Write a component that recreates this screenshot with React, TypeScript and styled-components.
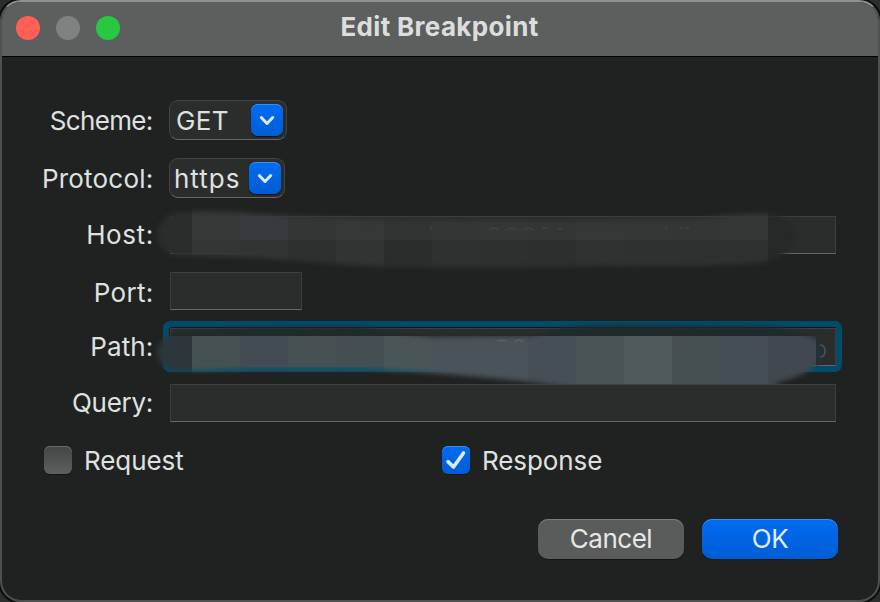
import React from 'react';
import styled, { createGlobalStyle } from 'styled-components';

const GlobalStyle = createGlobalStyle`
  * { box-sizing: border-box; }
  html, body { margin: 0; padding: 0; background: #2c2e2d; overflow: hidden; }
  body { font-family: Inter, "Liberation Sans", sans-serif; color: #dfe1e0; -webkit-font-smoothing: antialiased; }
  button, input { font: inherit; color: inherit; }
`;

const Window = styled.main`
  position: relative;
  width: 880px;
  height: 602px;
  display: flex;
  flex-direction: column;
  overflow: hidden;
  border: 2px solid #4f5150;
  border-top-color: #8f9190;
  border-radius: 21px;
  background: #202221;
  box-shadow: 0 0 0 2px #0b0c0c;
`;

const TitleBar = styled.header`
  flex: none;
  height: 55px;
  margin: 0 -2px;
  padding: 0 16px;
  display: flex;
  align-items: center;
  background: #5d5f5e;
  border-bottom: 1px solid #000;
  box-shadow: inset 2px 0 #7a7c7b, inset -2px 0 #7a7c7b;
`;

const Lights = styled.div`
  display: flex;
  gap: 16px;
  width: 104px;
  margin-top: -3px;
`;

const Light = styled.span<{ $color: string }>`
  width: 24px;
  height: 24px;
  border-radius: 50%;
  background: ${(p) => p.$color};
`;

const Title = styled.h1`
  flex: 1;
  margin: -5px 105px 0 0;
  text-align: center;
  font-size: 26px;
  line-height: 32px;
  font-weight: 700;
  letter-spacing: 0.33px;
  color: #dcdedd;
`;

const Form = styled.form`
  position: relative;
  flex: 1;
  padding: 43px 40px 0 40px;
  display: flex;
  flex-direction: column;
`;

const Fields = styled.div`
  display: grid;
  grid-template-columns: 112px 667px;
  grid-template-rows: 40px 40px repeat(4, 38px);
  gap: 18px 15px;
  align-items: center;
`;

const Label = styled.label<{ $spacing: number; $drop?: number }>`
  justify-self: end;
  white-space: nowrap;
  font-size: 26px;
  line-height: 32px;
  letter-spacing: ${(p) => p.$spacing}px;
  margin-right: ${(p) => 0.8 - p.$spacing}px;
  padding-top: ${(p) => (p.$drop ?? 0) * 2}px;
`;

const Popup = styled.button.attrs({ type: 'button' })<{ $width: number; $inset: number }>`
  width: ${(p) => p.$width}px;
  height: 40px;
  padding: 0 3px 0 ${(p) => p.$inset}px;
  display: flex;
  align-items: center;
  justify-content: space-between;
  background: #2b2d2c;
  border: 1px solid #424443;
  border-bottom-color: #656766;
  border-radius: 9px;
  font-size: 26px;
  line-height: 32px;
`;

const PopupText = styled.span<{ $spacing: number }>`
  padding-top: 2px;
  width: 68px;
  text-align: left;
  letter-spacing: ${(p) => p.$spacing}px;
`;

const Arrow = styled.span`
  width: 32px;
  height: 32px;
  flex: none;
  border-radius: 7px;
  background: linear-gradient(#006cf2, #005dd4);
  box-shadow: inset 0 1px #3b8df3, 0 1px 1px #111;
`;

const Field = styled.input<{ $width: number; $focused?: boolean }>`
  width: ${(p) => p.$width}px;
  height: 38px;
  margin: 0 0 0 1px;
  padding: 0 4px;
  outline: none;
  border: 1px solid #3d3f3e;
  border-bottom-color: #656766;
  border-radius: 0;
  background: #2b2d2c;
  ${(p) => p.$focused && 'box-shadow: 0 -1px #151818, -1px 0 #151818;'}
`;

const FocusRing = styled.div`
  width: 679px;
  height: 51px;
  margin: -7px 0 -6px -6px;
  padding: 7px 0 0 6px;
  border-radius: 7px;
  background: #004c6b;
  display: flex;
`;

const Checks = styled.div`
  display: grid;
  grid-template-columns: 398px 1fr;
  margin: 22px 0 0 2px;
`;

const Check = styled.label`
  display: flex;
  align-items: center;
  gap: 12px;
  height: 32px;
  font-size: 26px;
  line-height: 32px;
  letter-spacing: -0.08px;
`;

const CheckText = styled.span`
  padding-top: 2px;
`;

const Box = styled.span<{ $on?: boolean }>`
  width: 28px;
  height: 28px;
  border-radius: 6px;
  background: ${(p) => (p.$on ? 'linear-gradient(#006cf2, #005dd4)' : 'linear-gradient(#444645, #5e605f)')};
  box-shadow: inset 0 1px ${(p) => (p.$on ? '#3b8df3' : '#686a69')}, 0 1px 1px #151616;
  svg { display: block; }
`;

const Actions = styled.footer`
  display: flex;
  gap: 18px;
  justify-content: flex-end;
  margin-top: 43px;
`;

const Button = styled.button.attrs({ type: 'button' })<{ $primary?: boolean }>`
  width: ${(p) => (p.$primary ? 136 : 146)}px;
  height: 40px;
  padding: 0;
  border: 0;
  border-radius: 10px;
  font-size: 26px;
  line-height: 40px;
  letter-spacing: -0.5px;
  color: ${(p) => (p.$primary ? '#dfebfb' : '#e6e7e7')};
  background: ${(p) => (p.$primary ? 'linear-gradient(#006cf2, #005dd4)' : '#5a5c5b')};
  box-shadow: inset 0 1px ${(p) => (p.$primary ? '#3b8df3' : '#7b7d7c')}, 0 1px 1px #151616;
`;

const Redaction = styled.svg`
  position: absolute;
  left: 148px;
  top: 143px;
  width: 700px;
  height: 190px;
  pointer-events: none;
`;

const Chevron = () => (
  <Arrow>
    <svg width="32" height="32" viewBox="0 0 32 32" fill="none">
      <path d="M10.3 13.5 16 19.5 21.7 13.5" stroke="#dce9fb" strokeWidth="3" strokeLinecap="round" strokeLinejoin="round" />
    </svg>
  </Arrow>
);

const hostTop = ['#363837', '#373b3f', '#343635', '#363837', '#323433', '#343635', '#353736', '#343635', '#363837', '#353736', '#343635', '#353736'];
const hostBottom = ['#343635', '#323433', '#2e302f', '#323433', '#2b2d2c', '#2f3130', '#2e302f', '#2d2f2e', '#303231', '#2f3130', '#2f3130', '#2f3130'];
const pathCells = ['#455152', '#444c53', '#455152', '#444f54', '#495556', '#4a535a', '#4a535a', '#464e56', '#485456', '#4e5a5c', '#445052', '#444d53', '#41484f'];

const Smears = () => (
  <Redaction viewBox="150 200 700 190" aria-hidden="true">
    <defs>
      <filter id="soft" colorInterpolationFilters="sRGB" x="-5%" y="-30%" width="110%" height="160%"><feGaussianBlur stdDeviation="2.8" /></filter>
      <mask id="hostMask" maskUnits="userSpaceOnUse" x="150" y="200" width="700" height="190">
        <path filter="url(#soft)" fill="#fff" d="M180 212Q215 210 255 214Q330 218 390 220Q560 222 700 219Q735 213 772 214Q797 222 795 238Q793 254 765 262Q725 267 600 266Q500 269 390 267Q330 264 285 260Q240 256 175 256Q157 250 157 235Q159 215 180 212Z" />
      </mask>
      <mask id="pathMask" maskUnits="userSpaceOnUse" x="150" y="200" width="700" height="184">
        <path filter="url(#soft)" fill="#fff" d="M175 333Q210 327 360 327Q395 332 430 337L530 336Q560 325 620 325L770 327Q824 334 825 350Q824 370 780 382L765 394L590 392Q540 382 500 379Q420 371 360 369Q250 368 190 371Q158 374 157 351Q160 338 175 333Z" />
      </mask>
    </defs>
    <g mask="url(#hostMask)" shapeRendering="crispEdges">
      <rect x="150" y="200" width="42" height="80" fill="#2b2d2c" />
      {hostTop.map((c, i) => <rect key={i} x={192 + i * 48} y="200" width="48" height="40" fill={c} />)}
      {hostBottom.map((c, i) => <rect key={i} x={192 + i * 48} y="240" width="48" height="40" fill={c} />)}
      <rect x="768" y="200" width="48" height="80" fill="#272928" />
    </g>
    <g stroke="#414342" strokeWidth="1.4" fill="none">
      <path d="M431 226v4M489 230q5-4 9 0M507 230q5-4 9 0M524 230q5-4 9 0M542 228h6M558 229h4M665 229l2-3M680 228h3M686 228h3" />
    </g>
    <g mask="url(#pathMask)" shapeRendering="crispEdges">
      <rect x="150" y="320" width="42" height="64" fill="#2c373b" />
      <rect x="170" y="320" width="656" height="16" fill="#202a2c" />
      {pathCells.map((c, i) => <rect key={i} x={192 + i * 48} y="336" width="48" height="48" fill={c} />)}
      <rect x="816" y="336" width="12" height="48" fill="#263036" />
    </g>
    <g fill="none" strokeWidth="1.6">
      <path d="M497 340.5h10M514 342q5-4 10 0" stroke="#59625f" />
      <path d="M820 345q5 0 5 6t-5 6" stroke="#4b5256" />
    </g>
  </Redaction>
);

export default function App() {
  return (
    <>
      <GlobalStyle />
      <Window>
        <TitleBar>
          <Lights>
            <Light $color="#ff5f57" />
            <Light $color="#808281" />
            <Light $color="#28c840" />
          </Lights>
          <Title>Edit Breakpoint</Title>
        </TitleBar>
        <Form>
          <Fields>
            <Label $spacing={-0.68} $drop={1}>Scheme:</Label>
            <Popup $width={118} $inset={6}><PopupText $spacing={0.4}>GET</PopupText><Chevron /></Popup>
            <Label $spacing={0.2} $drop={1}>Protocol:</Label>
            <Popup $width={116} $inset={4}><PopupText $spacing={1}>https</PopupText><Chevron /></Popup>
            <Label $spacing={0.6} htmlFor="host">Host:</Label>
            <Field id="host" $width={666} />
            <Label $spacing={0.3} $drop={2} htmlFor="port">Port:</Label>
            <Field id="port" $width={132} />
            <Label $spacing={0.1} htmlFor="path">Path:</Label>
            <FocusRing><Field id="path" $width={666} $focused /></FocusRing>
            <Label $spacing={-0.3} htmlFor="query">Query:</Label>
            <Field id="query" $width={666} />
          </Fields>
          <Checks>
            <Check><Box /><CheckText>Request</CheckText></Check>
            <Check>
              <Box $on>
                <svg width="28" height="28" viewBox="0 0 28 28" fill="none">
                  <path d="M6 15.6 11.5 21 21.5 7" stroke="#dce9fb" strokeWidth="3.6" strokeLinecap="round" strokeLinejoin="round" />
                </svg>
              </Box>
              <CheckText>Response</CheckText>
            </Check>
          </Checks>
          <Actions>
            <Button>Cancel</Button>
            <Button $primary>OK</Button>
          </Actions>
          <Smears />
        </Form>
      </Window>
    </>
  );
}
